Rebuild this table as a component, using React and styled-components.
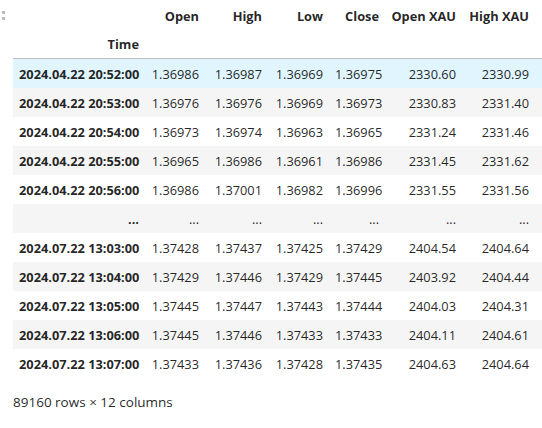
import React from "react";
import styled, { createGlobalStyle } from "styled-components";

const GlobalStyle = createGlobalStyle`
  html, body {
    margin: 0;
    padding: 0;
    background: #ffffff;
    overflow: hidden;
  }
  body {
    font-family: "Open Sans", "Liberation Sans", sans-serif;
    color: rgba(0, 0, 0, 0.87);
  }
`;

const Page = styled.div`
  position: relative;
  width: 542px;
  height: 428px;
  overflow: hidden;
`;

const Prompt = styled.div`
  position: absolute;
  left: 2px;
  top: 11px;
  display: flex;
  flex-direction: column;
  gap: 3px;
`;

const Dot = styled.span`
  width: 3px;
  height: 3px;
  background: #bdbdbd;
`;

const Output = styled.div`
  padding: 2px 0 0 13px;
`;

const Table = styled.table`
  border-collapse: collapse;
  border-spacing: 0;
  table-layout: fixed;
  font-size: 12.8px;
  width: ${(p) => p.$width}px;
`;

const HeadCell = styled.th`
  height: 28px;
  padding: 0 6px;
  text-align: right;
  font-weight: 700;
  white-space: nowrap;
  vertical-align: middle;
`;

const Head = styled.thead`
  border-bottom: 1px solid #bdbdbd;
`;

const Row = styled.tr`
  background: ${(p) => (p.$hover ? "#e1f5fe" : p.$striped ? "#f5f5f5" : "#ffffff")};
`;

const IndexCell = styled.th`
  height: 29px;
  padding: 0 6px;
  text-align: right;
  font-weight: 700;
  white-space: nowrap;
`;

const Cell = styled.td`
  height: 29px;
  padding: 0 6px;
  text-align: right;
  white-space: nowrap;
`;

const Filler = styled.td`
  padding: 0;
`;

const Footer = styled.p`
  margin: 15px 0 0;
  font-size: 13.5px;
`;

const columns = [
  { name: "Open", w: 60 },
  { name: "High", w: 63 },
  { name: "Low", w: 61 },
  { name: "Close", w: 56 },
  { name: "Open XAU", w: 77 },
  { name: "High XAU", w: 73 },
];

const rows = [
  ["2024.04.22 20:52:00", "1.36986", "1.36987", "1.36969", "1.36975", "2330.60", "2330.99"],
  ["2024.04.22 20:53:00", "1.36976", "1.36976", "1.36969", "1.36973", "2330.83", "2331.40"],
  ["2024.04.22 20:54:00", "1.36973", "1.36974", "1.36963", "1.36965", "2331.24", "2331.46"],
  ["2024.04.22 20:55:00", "1.36965", "1.36986", "1.36961", "1.36986", "2331.45", "2331.62"],
  ["2024.04.22 20:56:00", "1.36986", "1.37001", "1.36982", "1.36996", "2331.55", "2331.56"],
  ["...", "...", "...", "...", "...", "...", "..."],
  ["2024.07.22 13:03:00", "1.37428", "1.37437", "1.37425", "1.37429", "2404.54", "2404.64"],
  ["2024.07.22 13:04:00", "1.37429", "1.37446", "1.37429", "1.37445", "2403.92", "2404.44"],
  ["2024.07.22 13:05:00", "1.37445", "1.37447", "1.37443", "1.37444", "2404.03", "2404.31"],
  ["2024.07.22 13:06:00", "1.37445", "1.37446", "1.37433", "1.37433", "2404.11", "2404.61"],
  ["2024.07.22 13:07:00", "1.37433", "1.37436", "1.37428", "1.37435", "2404.63", "2404.64"],
];

const indexWidth = 132;
const fillerWidth = 40;
const tableWidth = indexWidth + fillerWidth + columns.reduce((s, c) => s + c.w, 0);

export default function App() {
  return (
    <Page>
      <GlobalStyle />
      <Prompt>
        <Dot />
        <Dot />
      </Prompt>
      <Output>
        <Table $width={tableWidth}>
          <colgroup>
            <col style={{ width: indexWidth }} />
            {columns.map((c) => (
              <col key={c.name} style={{ width: c.w }} />
            ))}
            <col style={{ width: fillerWidth }} />
          </colgroup>
          <Head>
            <tr>
              <HeadCell />
              {columns.map((c) => (
                <HeadCell key={c.name}>{c.name}</HeadCell>
              ))}
              <Filler />
            </tr>
            <tr>
              <HeadCell>Time</HeadCell>
              {columns.map((c) => (
                <HeadCell key={c.name} />
              ))}
              <Filler />
            </tr>
          </Head>
          <tbody>
            {rows.map((r, i) => (
              <Row key={i} $hover={i === 0} $striped={i % 2 === 1}>
                <IndexCell>{r[0]}</IndexCell>
                {r.slice(1).map((v, j) => (
                  <Cell key={j}>{v}</Cell>
                ))}
                <Filler />
              </Row>
            ))}
          </tbody>
        </Table>
        <Footer>89160 rows × 12 columns</Footer>
      </Output>
    </Page>
  );
}
